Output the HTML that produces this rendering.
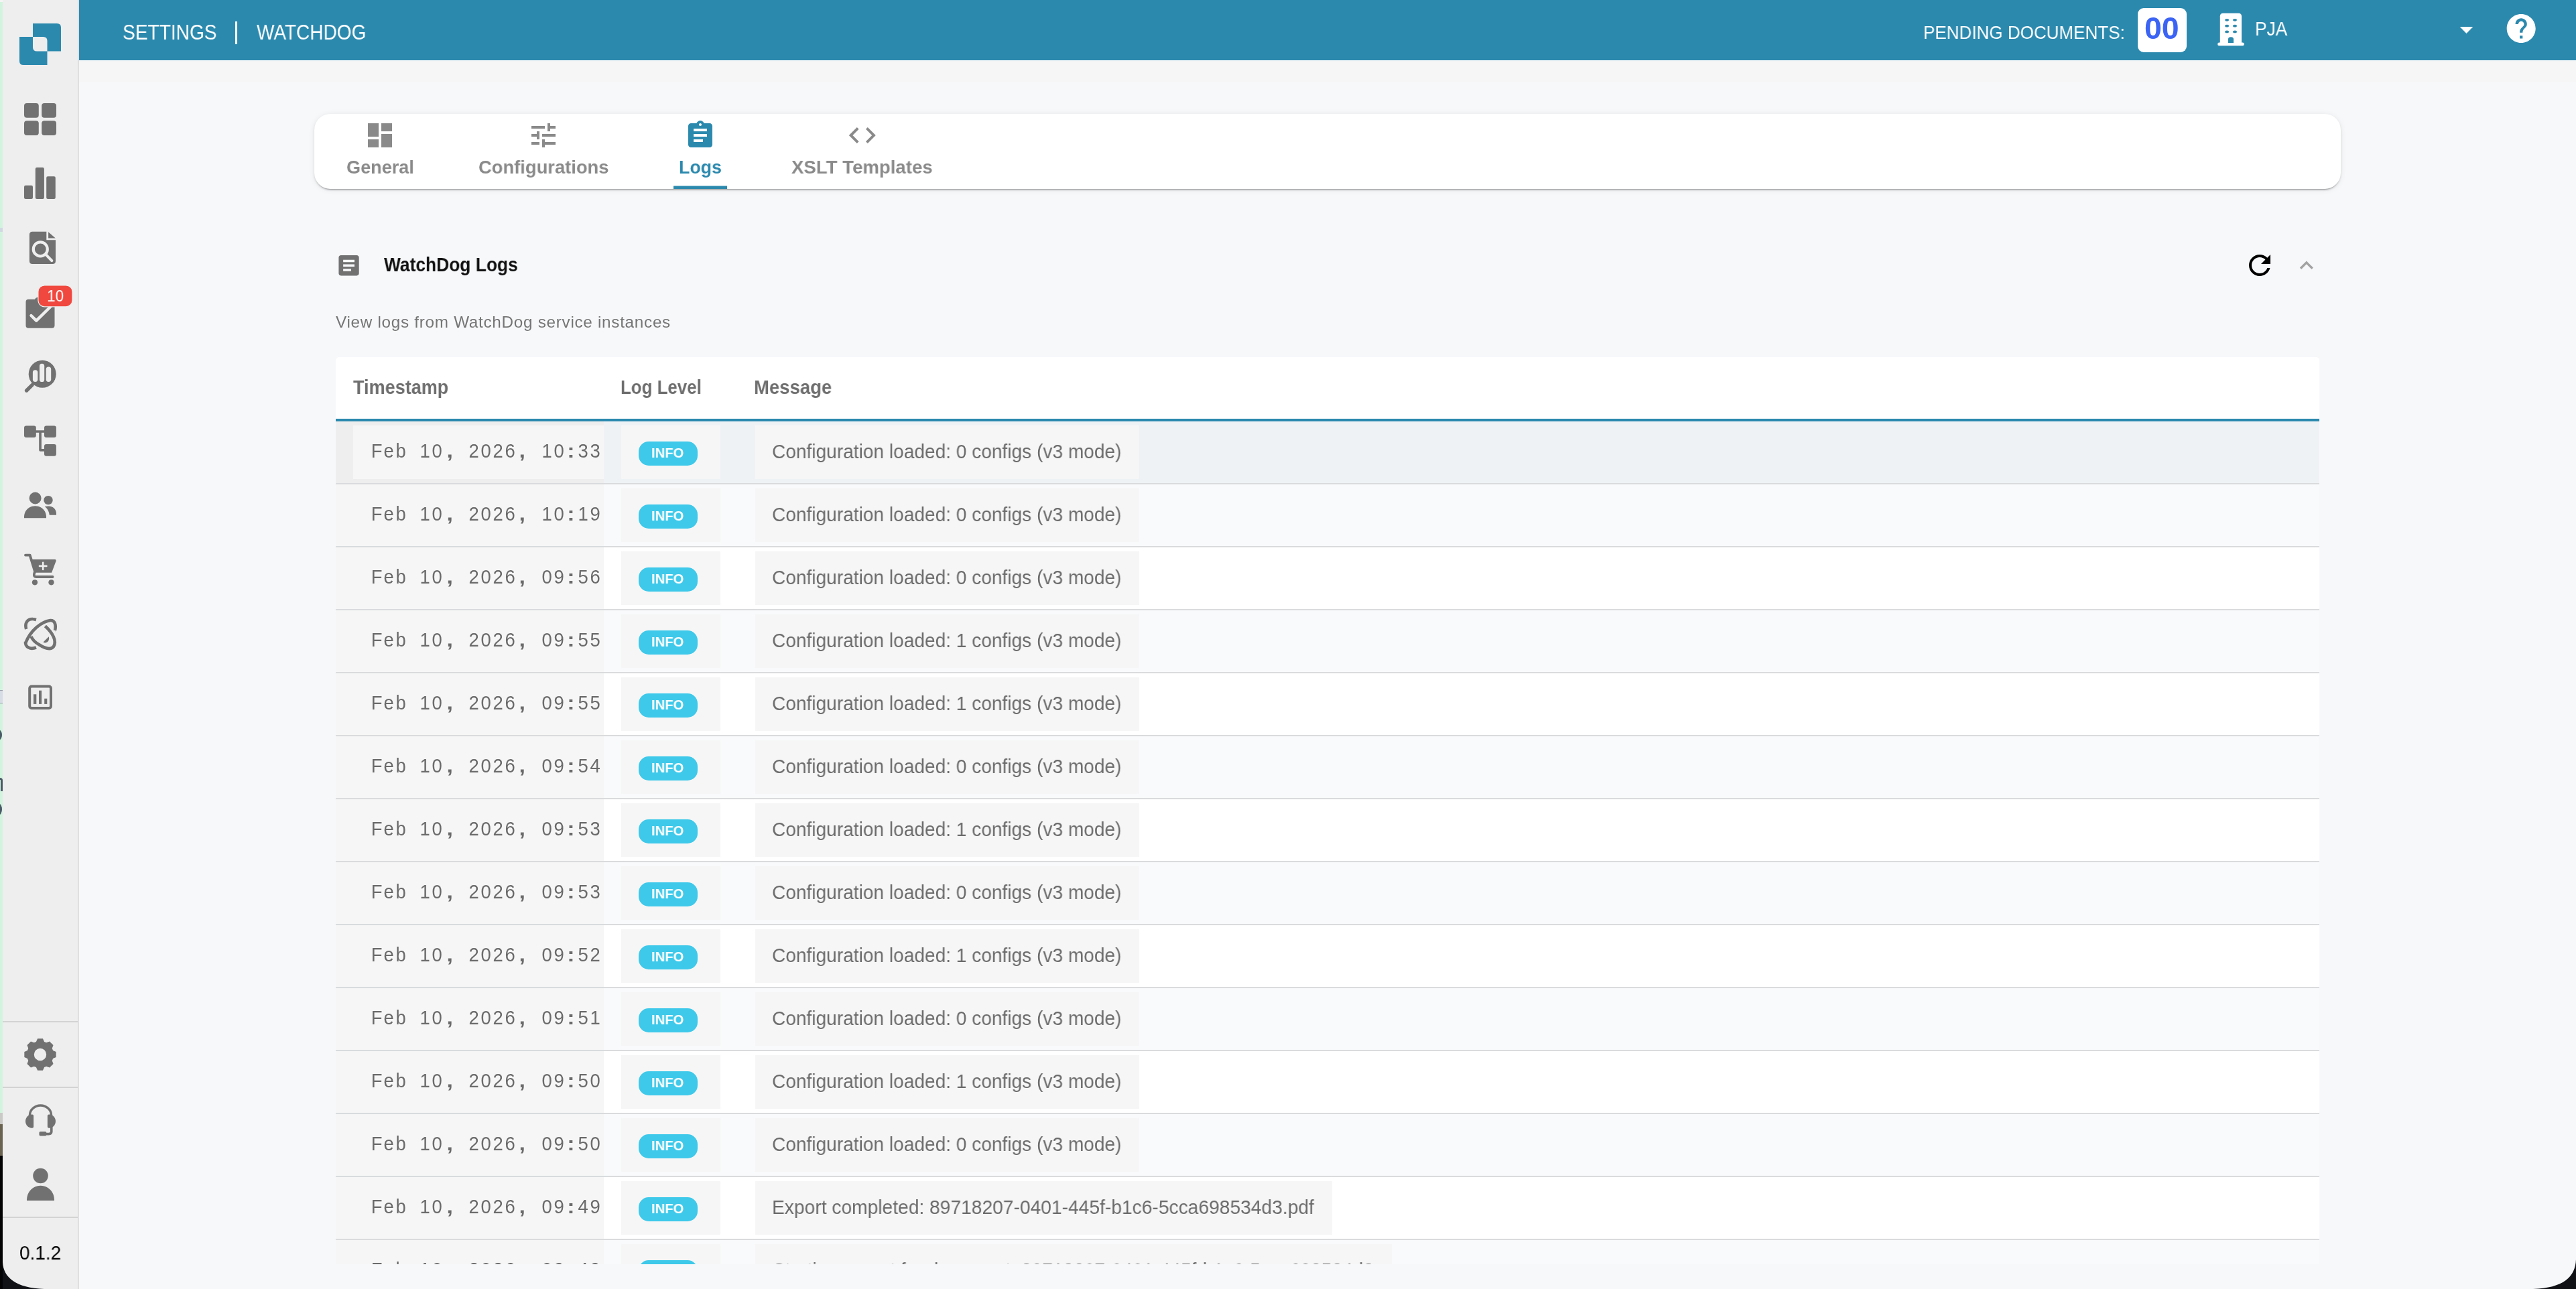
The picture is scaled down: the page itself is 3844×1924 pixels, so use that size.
<!DOCTYPE html>
<html><head><meta charset="utf-8"><title>WatchDog Logs</title>
<style>
html,body{margin:0;padding:0}
body{width:3844px;height:1924px;overflow:hidden;position:relative;background:#f7f8fa;font-family:"Liberation Sans",sans-serif}
.t{position:absolute;white-space:nowrap;will-change:transform}
.ms{display:inline-block;width:18.13px;text-align:center}
.ms i{display:inline-block;font-style:normal;transform:scaleX(0.93)}
.ms i.p{font-weight:700;transform:scale(1.15,1.0)}
</style></head><body>
<div style="position:absolute;left:0;top:0;width:4px;height:1924px;background:#d2f4df"></div><div style="position:absolute;left:0;top:0;width:4px;height:3px;background:#f4f4f4"></div><div style="position:absolute;left:0;top:1661px;width:4px;height:17px;background:#c9c9c6"></div><div style="position:absolute;left:0;top:1678px;width:4px;height:47px;background:#6a634f"></div><div style="position:absolute;left:0;top:1725px;width:4px;height:199px;background:#030303"></div><div style="position:absolute;left:0;top:340.4px;width:4px;height:5.5px;background:#cfd8e0"></div><div style="position:absolute;left:0;top:1030px;width:4px;height:19.5px;background:#d6dde5;border-top:1.5px solid #9aa3ad;border-bottom:1.5px solid #9aa3ad;box-sizing:border-box"></div><div style="position:absolute;left:-8px;top:1089px;width:11px;height:16px;border:3px solid #4a5a66;border-radius:50%;box-sizing:border-box"></div><div style="position:absolute;left:0;top:1161px;width:4px;height:20px;border-right:3px solid #4a5a66;border-top:3px solid #4a5a66;border-top-right-radius:6px;box-sizing:border-box"></div><div style="position:absolute;left:-8px;top:1198.5px;width:11px;height:18.5px;border:3px solid #4a5a66;border-radius:50%;box-sizing:border-box"></div><div style="position:absolute;left:4px;top:0;width:112px;height:1924px;background:#eeeeee"></div><div style="position:absolute;left:116px;top:0;width:2px;height:1924px;background:#dfdfdf"></div><div style="position:absolute;left:118px;top:0;width:3726px;height:90px;background:#2b89ae"></div><div style="position:absolute;left:118px;top:89px;width:3726px;height:1px;background:#2782a8"></div><div style="position:absolute;left:118px;top:90px;width:3726px;height:1.2px;background:#ffffff"></div><div style="position:absolute;left:118px;top:91.2px;width:3726px;height:31px;background:#f6f6f6"></div><div style="position:absolute;left:4px;top:1524px;width:112px;height:2px;background:#d3d3d3"></div><div style="position:absolute;left:4px;top:1622px;width:112px;height:2px;background:#d3d3d3"></div><div style="position:absolute;left:4px;top:1816px;width:112px;height:2px;background:#d3d3d3"></div><svg style="position:absolute;left:0;top:0" width="118" height="1924" viewBox="0 0 118 1924"><path fill="#2b89ae" d="M49,35 H85 Q91,35 91,41 V76.5 H49 Z"/><path fill="#2b89ae" d="M29,55 H70.5 V97 H35 Q29,97 29,91 Z"/><path fill="#eeeeee" d="M49,55 H64.5 Q70.5,55 70.5,61 V76.5 H55 Q49,76.5 49,70.5 Z"/><rect x="36" y="154" width="21.8" height="21.8" rx="4" fill="#717171"/><rect x="36" y="180.2" width="21.8" height="21.8" rx="4" fill="#717171"/><rect x="62.2" y="154" width="21.8" height="21.8" rx="4" fill="#717171"/><rect x="62.2" y="180.2" width="21.8" height="21.8" rx="4" fill="#717171"/><rect x="36" y="276.7" width="13" height="20.2" rx="2.2" fill="#717171"/><rect x="52.8" y="249.9" width="13.1" height="47" rx="2.2" fill="#717171"/><rect x="69.2" y="263.2" width="13.6" height="33.7" rx="2.2" fill="#717171"/><path fill="#717171" d="M48.4,345.8 H69.3 V358.3 H83 V389.4 Q83,393.9 78.5,393.9 H48.4 Q43.9,393.9 43.9,389.4 V350.3 Q43.9,345.8 48.4,345.8 Z"/><path fill="#717171" d="M72.1,346.2 L82.8,355.5 H72.1 Z"/><circle cx="60.3" cy="371.9" r="10.5" fill="none" stroke="#eeeeee" stroke-width="4.2"/><line x1="68.3" y1="379.9" x2="77.3" y2="389.1" stroke="#eeeeee" stroke-width="4.2" stroke-linecap="round"/><path fill="#717171" d="M42.5,446.7 H52 Q54,443 60,443 Q66,443 68,446.7 H77.5 Q81.5,446.7 81.5,450.7 V485.8 Q81.5,489.8 77.5,489.8 H42.5 Q38.5,489.8 38.5,485.8 V450.7 Q38.5,446.7 42.5,446.7 Z"/><polyline points="46.5,471 54.2,478.6 75.2,458" fill="none" stroke="#eeeeee" stroke-width="4.4" stroke-linecap="round" stroke-linejoin="round"/><rect x="56.9" y="425.9" width="51.1" height="31.9" rx="9.5" fill="#f0483e" stroke="#eeeeee" stroke-width="1.2"/><circle cx="63.2" cy="558.3" r="20.5" fill="#717171"/><line x1="39.6" y1="583" x2="48" y2="574.6" stroke="#717171" stroke-width="5.4" stroke-linecap="round"/><rect x="48.9" y="552.3" width="7.4" height="17.7" rx="3.7" fill="#eeeeee"/><rect x="59" y="542.7" width="7.2" height="27.3" rx="3.6" fill="#eeeeee"/><rect x="68.7" y="547.6" width="7.5" height="22.4" rx="3.7" fill="#eeeeee"/><rect x="36" y="635.5" width="17.8" height="17.4" rx="3" fill="#717171"/><rect x="66" y="635.5" width="17.9" height="17.4" rx="3" fill="#717171"/><rect x="66" y="662.9" width="17.9" height="17.8" rx="3" fill="#717171"/><rect x="52" y="642.3" width="16" height="3.5" fill="#717171"/><path fill="#717171" d="M58.2,643 H61.9 V670 H67 V673.7 H60.2 Q58.2,673.7 58.2,671.7 Z"/><circle cx="52.6" cy="743.5" r="9" fill="#717171"/><path fill="#717171" d="M36,773.3 V770.5 C36.5,761.5 44,755.3 52.5,755.3 C61,755.3 68.5,761.5 69,770.5 V773.3 Z"/><circle cx="72" cy="746.6" r="6.7" fill="#717171"/><path fill="#717171" d="M66.8,756 C68.5,755.6 71,755.4 73,755.4 C79.5,755.4 84,760.5 84,766.5 V768.7 H73.8 C73.2,763.5 70.8,759 66.8,756 Z"/><polyline points="38,828.6 44.6,828.6 51.8,852" fill="none" stroke="#717171" stroke-width="3.9" stroke-linecap="round" stroke-linejoin="round"/><path fill="#717171" d="M47.2,835.1 H82.3 Q84.3,835.4 83.6,837.4 L77.1,854.7 H52.8 Z"/><path d="M52.2,852.5 L50.9,857 Q50.2,861 54,861 H78.6" fill="none" stroke="#717171" stroke-width="3.8" stroke-linecap="round" stroke-linejoin="round"/><circle cx="52" cy="869.3" r="4.1" fill="#717171"/><circle cx="76.5" cy="869.3" r="4.1" fill="#717171"/><line x1="59" y1="844.9" x2="69.4" y2="844.9" stroke="#eeeeee" stroke-width="2.6" stroke-linecap="round"/><line x1="64.2" y1="839.8" x2="64.2" y2="850" stroke="#eeeeee" stroke-width="2.6" stroke-linecap="round"/><g fill="none" stroke="#717171" stroke-width="4.6" stroke-linecap="butt"><path d="M39.2,939 C36.5,930 41,923.5 49,924 C50.5,924 52,924.5 54,925"/><path d="M38,960 C46,940 62,928 75,926 C82,925.5 84,933 82,941"/><path d="M82,941 L82.2,941"/><path d="M67.4,934.5 C79,945 85,957 80,965 C76,970 68,968.5 58,962 C52,958.5 48,954 46.5,950"/><path d="M54,966.5 C45,970 37.5,966 38,958"/></g><path fill="#717171" d="M72.8,950.3 C74,955 72,959 67.5,959.5 C66.5,959.5 65.5,959 64.5,958.5 Z"/><rect x="44.2" y="1024.5" width="31.8" height="32.4" rx="3" fill="none" stroke="#717171" stroke-width="4"/><rect x="50" y="1036.3" width="4.3" height="14.6" fill="#717171"/><rect x="58" y="1030.7" width="4.1" height="20.2" fill="#717171"/><rect x="66.2" y="1042.7" width="4.1" height="8.2" fill="#717171"/><path fill="#717171" fill-rule="evenodd" d="M53.90,1554.95 L56.06,1550.33 L63.94,1550.33 L66.10,1554.95 L69.15,1556.22 L73.95,1554.47 L79.53,1560.05 L77.78,1564.85 L79.05,1567.90 L83.67,1570.06 L83.67,1577.94 L79.05,1580.10 L77.78,1583.15 L79.53,1587.95 L73.95,1593.53 L69.15,1591.78 L66.10,1593.05 L63.94,1597.67 L56.06,1597.67 L53.90,1593.05 L50.85,1591.78 L46.05,1593.53 L40.47,1587.95 L42.22,1583.15 L40.95,1580.10 L36.33,1577.94 L36.33,1570.06 L40.95,1567.90 L42.22,1564.85 L40.47,1560.05 L46.05,1554.47 L50.85,1556.22Z M69.2,1574 A9.2,9.2 0 1 0 50.8,1574 A9.2,9.2 0 1 0 69.2,1574 Z"/><path d="M44.5,1667 V1664.5 A16,14.5 0 0 1 76.5,1664.5 V1667" fill="none" stroke="#717171" stroke-width="3.5"/><path fill="#717171" d="M50.1,1665.5 V1681.7 Q50.1,1683.7 48.1,1683.7 H47.5 C42.2,1683.7 38,1679.2 38,1673.6 C38,1668 42.2,1663.5 47.5,1663.5 H48.1 Q50.1,1663.5 50.1,1665.5 Z"/><path fill="#717171" d="M70.9,1665.5 V1681.7 Q70.9,1683.7 72.9,1683.7 H73.5 C78.8,1683.7 83,1679.2 83,1673.6 C83,1668 78.8,1663.5 73.5,1663.5 H72.9 Q70.9,1663.5 70.9,1665.5 Z"/><path d="M76.8,1682 V1689 Q76.8,1692.6 72.8,1692.6 H67" fill="none" stroke="#717171" stroke-width="3.6"/><rect x="58.5" y="1689" width="10.8" height="6.5" rx="1.8" fill="#717171"/><circle cx="60.5" cy="1755" r="11.3" fill="#717171"/><path fill="#717171" d="M40,1792 V1790.5 C40.5,1777.5 50,1769.7 60.5,1769.7 C71,1769.7 80.5,1777.5 81,1790.5 V1792 Z"/></svg><div class="t" style="left:69.78px;top:430.33px;font-size:24.42px;line-height:24.42px;color:#fff;font-weight:400;font-family:'Liberation Sans',sans-serif;transform:scaleX(0.9310);transform-origin:0 0;">10</div><div class="t" style="left:29.13px;top:1856.24px;font-size:28.78px;line-height:28.78px;color:#000;font-weight:400;font-family:'Liberation Sans',sans-serif;transform:scaleX(0.9719);transform-origin:0 0;">0.1.2</div><div class="t" style="left:182.82px;top:33.18px;font-size:31.69px;line-height:31.69px;color:#fff;font-weight:400;font-family:'Liberation Sans',sans-serif;transform:scaleX(0.8871);transform-origin:0 0;">SETTINGS</div><div style="position:absolute;left:351px;top:32.4px;width:3.2px;height:34px;background:#fff"></div><div class="t" style="left:382.70px;top:33.18px;font-size:31.69px;line-height:31.69px;color:#fff;font-weight:400;font-family:'Liberation Sans',sans-serif;transform:scaleX(0.8836);transform-origin:0 0;">WATCHDOG</div><div class="t" style="left:2869.67px;top:33.88px;font-size:28.49px;line-height:28.49px;color:#fff;font-weight:400;font-family:'Liberation Sans',sans-serif;transform:scaleX(0.9139);transform-origin:0 0;">PENDING DOCUMENTS:</div><div style="position:absolute;left:3190px;top:12px;width:73px;height:66px;border-radius:9px;background:#fff"></div><div class="t" style="left:3200.15px;top:20.12px;font-size:45.93px;line-height:45.93px;color:#3c64f4;font-weight:700;font-family:'Liberation Sans',sans-serif;transform:scaleX(1.0127);transform-origin:0 0;">00</div><svg style="position:absolute;left:0;top:0" width="3844" height="90" viewBox="0 0 3844 90"><path fill="#fff" d="M3312.8,64 V24.3 Q3312.8,19.8 3317.3,19.8 H3340.5 Q3345,19.8 3345,24.3 V64 Z"/><rect x="3309.2" y="63.5" width="39.6" height="4.7" rx="2.3" fill="#fff"/><ellipse cx="3323.1" cy="29.8" rx="2.9" ry="1.9" fill="#2b89ae"/><ellipse cx="3323.1" cy="38.7" rx="2.9" ry="1.9" fill="#2b89ae"/><ellipse cx="3323.1" cy="47.4" rx="2.9" ry="1.9" fill="#2b89ae"/><ellipse cx="3335" cy="29.8" rx="2.9" ry="1.9" fill="#2b89ae"/><ellipse cx="3335" cy="38.7" rx="2.9" ry="1.9" fill="#2b89ae"/><ellipse cx="3335" cy="47.4" rx="2.9" ry="1.9" fill="#2b89ae"/><path fill="#2b89ae" d="M3325,64 V58.5 Q3325,55.2 3329,55.2 Q3333,55.2 3333,58.5 V64 Z"/><path fill="#fff" d="M3670.7,39.9 H3690.3 L3680.5,50.1 Z"/><g transform="translate(3736.4,16.6) scale(2.15)"><path fill="#fff" d="M12 2C6.48 2 2 6.48 2 12s4.48 10 10 10 10-4.48 10-10S17.52 2 12 2zm1 17h-2v-2h2v2zm2.07-7.75l-.9.92C13.45 12.9 13 13.5 13 15h-2v-.5c0-1.1.45-2.1 1.17-2.83l1.24-1.26c.37-.36.59-.86.59-1.41 0-1.1-.9-2-2-2s-2 .9-2 2H8c0-2.21 1.79-4 4-4s4 1.79 4 4c0 .88-.36 1.68-.93 2.25z"/></g></svg><div class="t" style="left:3364.64px;top:29.17px;font-size:29.22px;line-height:29.22px;color:#fff;font-weight:400;font-family:'Liberation Sans',sans-serif;transform:scaleX(0.9020);transform-origin:0 0;">PJA</div><div style="position:absolute;left:469px;top:170px;width:3024px;height:112px;border-radius:24px;background:#fff;box-shadow:0 3px 2px -2px rgba(0,0,0,0.30),0 2px 3px 0 rgba(0,0,0,0.10),0 1px 10px 0 rgba(0,0,0,0.08)"></div><svg style="position:absolute;left:0;top:0" width="3844" height="300" viewBox="0 0 3844 300"><g transform="translate(543,178) scale(2)"><path fill="#8a8a8a" d="M3 13h8V3H3v10zm0 8h8v-6H3v6zm10 0h8V11h-8v10zm0-18v6h8V3h-8z"/></g><g transform="translate(787,178) scale(2)"><path fill="#8a8a8a" d="M3 17v2h6v-2H3zM3 5v2h10V5H3zm10 16v-2h8v-2h-8v-2h-2v6h2zM7 9v2H3v2h4v2h2V9H7zm14 4v-2H11v2h10zm-6-4h2V7h4V5h-4V3h-2v6z"/></g><g transform="translate(1021,178) scale(2)"><path fill="#2b89ae" d="M19 3h-4.18C14.4 1.84 13.3 1 12 1c-1.3 0-2.4.84-2.82 2H5c-1.1 0-2 .9-2 2v14c0 1.1.9 2 2 2h14c1.1 0 2-.9 2-2V5c0-1.1-.9-2-2-2zm-7 0c.55 0 1 .45 1 1s-.45 1-1 1-1-.45-1-1 .45-1 1-1zm2 14H7v-2h7v2zm3-4H7v-2h10v2zm0-4H7V7h10v2z"/></g><g transform="translate(1262.8,178) scale(2)"><path fill="#8a8a8a" d="M9.4 16.6L4.8 12l4.6-4.6L8 6l-6 6 6 6 1.4-1.4zm5.2 0l4.6-4.6-4.6-4.6L16 6l6 6-6 6-1.4-1.4z"/></g><rect x="1005" y="277.5" width="80" height="4.5" fill="#2b89ae"/></svg><div class="t" style="left:516.75px;top:234.78px;font-size:28.49px;line-height:28.49px;color:#8a8a8a;font-weight:700;font-family:'Liberation Sans',sans-serif;transform:scaleX(0.9505);transform-origin:0 0;">General</div><div class="t" style="left:713.95px;top:234.78px;font-size:28.49px;line-height:28.49px;color:#8a8a8a;font-weight:700;font-family:'Liberation Sans',sans-serif;transform:scaleX(0.9600);transform-origin:0 0;">Configurations</div><div class="t" style="left:1012.73px;top:234.78px;font-size:28.49px;line-height:28.49px;color:#2b89ae;font-weight:700;font-family:'Liberation Sans',sans-serif;transform:scaleX(0.9384);transform-origin:0 0;">Logs</div><div class="t" style="left:1180.60px;top:234.78px;font-size:28.49px;line-height:28.49px;color:#8a8a8a;font-weight:700;font-family:'Liberation Sans',sans-serif;transform:scaleX(0.9692);transform-origin:0 0;">XSLT Templates</div><svg style="position:absolute;left:0;top:360px" width="3844" height="70" viewBox="0 360 3844 70"><g transform="translate(500.35,376.05) scale(1.683)"><path fill="#717171" d="M19 3H5c-1.1 0-2 .9-2 2v14c0 1.1.9 2 2 2h14c1.1 0 2-.9 2-2V5c0-1.1-.9-2-2-2zm-5 14H7v-2h7v2zm3-4H7v-2h10v2zm0-4H7V7h10v2z"/></g><g transform="translate(3348,372) scale(2)"><path fill="#000" d="M17.65 6.35C16.2 4.9 14.21 4 12 4c-4.42 0-7.99 3.58-7.99 8s3.57 8 7.99 8c3.73 0 6.84-2.55 7.73-6h-2.08c-.82 2.33-3.04 4-5.65 4-3.31 0-6-2.69-6-6s2.69-6 6-6c1.66 0 3.14.69 4.22 1.78L13 11h7V4l-2.35 2.35z"/></g><g transform="translate(3421.7,376.1) scale(1.68)"><path fill="#a3a3a3" d="M12 8l-6 6 1.41 1.41L12 10.83l4.59 4.58L18 14z"/></g></svg><div class="t" style="left:573.00px;top:380.35px;font-size:29.36px;line-height:29.36px;color:#111;font-weight:700;font-family:'Liberation Sans',sans-serif;transform:scaleX(0.8984);transform-origin:0 0;">WatchDog Logs</div><div class="t" style="left:501.00px;top:468.95px;font-size:24.27px;line-height:24.27px;color:#757575;font-weight:400;font-family:'Liberation Sans',sans-serif;letter-spacing:0.714px;">View logs from WatchDog service instances</div><div style="position:absolute;left:501px;top:533px;width:2960px;height:1354px;overflow:hidden"><div style="position:absolute;left:0;top:0;width:2960px;height:96px;background:#fff;border-radius:5px 5px 0 0"></div><div style="position:absolute;left:0;top:92px;width:2960px;height:4px;background:#2b89ae"></div><div class="t" style="left:26.10px;top:30.03px;font-size:30.09px;line-height:30.09px;color:#6e6e6e;font-weight:700;font-family:'Liberation Sans',sans-serif;transform:scaleX(0.8989);transform-origin:0 0;">Timestamp</div><div class="t" style="left:424.68px;top:30.03px;font-size:30.09px;line-height:30.09px;color:#6e6e6e;font-weight:700;font-family:'Liberation Sans',sans-serif;transform:scaleX(0.8605);transform-origin:0 0;">Log Level</div><div class="t" style="left:624.18px;top:30.03px;font-size:30.09px;line-height:30.09px;color:#6e6e6e;font-weight:700;font-family:'Liberation Sans',sans-serif;transform:scaleX(0.9150);transform-origin:0 0;">Message</div><div style="position:absolute;left:0;top:96px;width:2960px;height:92px;background:#eef2f5"></div><div style="position:absolute;left:0;top:188px;width:2960px;height:2px;background:#d9dbdd"></div><div style="position:absolute;left:0;top:96px;width:400px;height:92px;background:#eeeeee"></div><div style="position:absolute;left:26px;top:102px;width:374px;height:79.5px;background:#f6f6f6"></div><div style="position:absolute;left:426px;top:102px;width:148px;height:79.5px;background:#f6f6f6"></div><div style="position:absolute;left:452px;top:126px;width:88px;height:36px;border-radius:15px;background:#3ec9ea"></div><div class="t" style="left:470.94px;top:133.43px;font-size:20.64px;line-height:20.64px;color:#fff;font-weight:700;font-family:'Liberation Sans',sans-serif;transform:scaleX(0.9803);transform-origin:0 0;">INFO</div><div class="t" style="left:51.80px;top:125.43px;font-size:29.5px;line-height:29.5px;color:#6b6b6b"><span class="ms"><i>F</i></span><span class="ms"><i>e</i></span><span class="ms"><i>b</i></span><span class="ms"><i>&nbsp;</i></span><span class="ms"><i>1</i></span><span class="ms"><i>0</i></span><span class="ms"><i class="p">,</i></span><span class="ms"><i>&nbsp;</i></span><span class="ms"><i>2</i></span><span class="ms"><i>0</i></span><span class="ms"><i>2</i></span><span class="ms"><i>6</i></span><span class="ms"><i class="p">,</i></span><span class="ms"><i>&nbsp;</i></span><span class="ms"><i>1</i></span><span class="ms"><i>0</i></span><span class="ms"><i class="p">:</i></span><span class="ms"><i>3</i></span><span class="ms"><i>3</i></span></div><div style="position:absolute;left:626px;top:102px;width:573.2px;height:79.5px;background:#f6f6f6"></div><div class="t" style="left:651.48px;top:126.15px;font-size:29.36px;line-height:29.36px;color:#6b6b6b;font-weight:400;font-family:'Liberation Sans',sans-serif;transform:scaleX(0.9566);transform-origin:0 0;">Configuration loaded: 0 configs (v3 mode)</div><div style="position:absolute;left:0;top:190px;width:2960px;height:92px;background:#f8fafb"></div><div style="position:absolute;left:0;top:282px;width:2960px;height:2px;background:#d9dbdd"></div><div style="position:absolute;left:0;top:190px;width:400px;height:92px;background:#f6f6f6"></div><div style="position:absolute;left:426px;top:196px;width:148px;height:79.5px;background:#f6f6f6"></div><div style="position:absolute;left:452px;top:220px;width:88px;height:36px;border-radius:15px;background:#3ec9ea"></div><div class="t" style="left:470.94px;top:227.43px;font-size:20.64px;line-height:20.64px;color:#fff;font-weight:700;font-family:'Liberation Sans',sans-serif;transform:scaleX(0.9803);transform-origin:0 0;">INFO</div><div class="t" style="left:51.80px;top:219.43px;font-size:29.5px;line-height:29.5px;color:#6b6b6b"><span class="ms"><i>F</i></span><span class="ms"><i>e</i></span><span class="ms"><i>b</i></span><span class="ms"><i>&nbsp;</i></span><span class="ms"><i>1</i></span><span class="ms"><i>0</i></span><span class="ms"><i class="p">,</i></span><span class="ms"><i>&nbsp;</i></span><span class="ms"><i>2</i></span><span class="ms"><i>0</i></span><span class="ms"><i>2</i></span><span class="ms"><i>6</i></span><span class="ms"><i class="p">,</i></span><span class="ms"><i>&nbsp;</i></span><span class="ms"><i>1</i></span><span class="ms"><i>0</i></span><span class="ms"><i class="p">:</i></span><span class="ms"><i>1</i></span><span class="ms"><i>9</i></span></div><div style="position:absolute;left:626px;top:196px;width:573.2px;height:79.5px;background:#f6f6f6"></div><div class="t" style="left:651.48px;top:220.15px;font-size:29.36px;line-height:29.36px;color:#6b6b6b;font-weight:400;font-family:'Liberation Sans',sans-serif;transform:scaleX(0.9566);transform-origin:0 0;">Configuration loaded: 0 configs (v3 mode)</div><div style="position:absolute;left:0;top:284px;width:2960px;height:92px;background:#ffffff"></div><div style="position:absolute;left:0;top:376px;width:2960px;height:2px;background:#d9dbdd"></div><div style="position:absolute;left:0;top:284px;width:400px;height:92px;background:#f6f6f6"></div><div style="position:absolute;left:426px;top:290px;width:148px;height:79.5px;background:#f6f6f6"></div><div style="position:absolute;left:452px;top:314px;width:88px;height:36px;border-radius:15px;background:#3ec9ea"></div><div class="t" style="left:470.94px;top:321.43px;font-size:20.64px;line-height:20.64px;color:#fff;font-weight:700;font-family:'Liberation Sans',sans-serif;transform:scaleX(0.9803);transform-origin:0 0;">INFO</div><div class="t" style="left:51.80px;top:313.43px;font-size:29.5px;line-height:29.5px;color:#6b6b6b"><span class="ms"><i>F</i></span><span class="ms"><i>e</i></span><span class="ms"><i>b</i></span><span class="ms"><i>&nbsp;</i></span><span class="ms"><i>1</i></span><span class="ms"><i>0</i></span><span class="ms"><i class="p">,</i></span><span class="ms"><i>&nbsp;</i></span><span class="ms"><i>2</i></span><span class="ms"><i>0</i></span><span class="ms"><i>2</i></span><span class="ms"><i>6</i></span><span class="ms"><i class="p">,</i></span><span class="ms"><i>&nbsp;</i></span><span class="ms"><i>0</i></span><span class="ms"><i>9</i></span><span class="ms"><i class="p">:</i></span><span class="ms"><i>5</i></span><span class="ms"><i>6</i></span></div><div style="position:absolute;left:626px;top:290px;width:573.2px;height:79.5px;background:#f6f6f6"></div><div class="t" style="left:651.48px;top:314.15px;font-size:29.36px;line-height:29.36px;color:#6b6b6b;font-weight:400;font-family:'Liberation Sans',sans-serif;transform:scaleX(0.9566);transform-origin:0 0;">Configuration loaded: 0 configs (v3 mode)</div><div style="position:absolute;left:0;top:378px;width:2960px;height:92px;background:#f8fafb"></div><div style="position:absolute;left:0;top:470px;width:2960px;height:2px;background:#d9dbdd"></div><div style="position:absolute;left:0;top:378px;width:400px;height:92px;background:#f6f6f6"></div><div style="position:absolute;left:426px;top:384px;width:148px;height:79.5px;background:#f6f6f6"></div><div style="position:absolute;left:452px;top:408px;width:88px;height:36px;border-radius:15px;background:#3ec9ea"></div><div class="t" style="left:470.94px;top:415.43px;font-size:20.64px;line-height:20.64px;color:#fff;font-weight:700;font-family:'Liberation Sans',sans-serif;transform:scaleX(0.9803);transform-origin:0 0;">INFO</div><div class="t" style="left:51.80px;top:407.43px;font-size:29.5px;line-height:29.5px;color:#6b6b6b"><span class="ms"><i>F</i></span><span class="ms"><i>e</i></span><span class="ms"><i>b</i></span><span class="ms"><i>&nbsp;</i></span><span class="ms"><i>1</i></span><span class="ms"><i>0</i></span><span class="ms"><i class="p">,</i></span><span class="ms"><i>&nbsp;</i></span><span class="ms"><i>2</i></span><span class="ms"><i>0</i></span><span class="ms"><i>2</i></span><span class="ms"><i>6</i></span><span class="ms"><i class="p">,</i></span><span class="ms"><i>&nbsp;</i></span><span class="ms"><i>0</i></span><span class="ms"><i>9</i></span><span class="ms"><i class="p">:</i></span><span class="ms"><i>5</i></span><span class="ms"><i>5</i></span></div><div style="position:absolute;left:626px;top:384px;width:573.2px;height:79.5px;background:#f6f6f6"></div><div class="t" style="left:651.48px;top:408.15px;font-size:29.36px;line-height:29.36px;color:#6b6b6b;font-weight:400;font-family:'Liberation Sans',sans-serif;transform:scaleX(0.9566);transform-origin:0 0;">Configuration loaded: 1 configs (v3 mode)</div><div style="position:absolute;left:0;top:472px;width:2960px;height:92px;background:#ffffff"></div><div style="position:absolute;left:0;top:564px;width:2960px;height:2px;background:#d9dbdd"></div><div style="position:absolute;left:0;top:472px;width:400px;height:92px;background:#f6f6f6"></div><div style="position:absolute;left:426px;top:478px;width:148px;height:79.5px;background:#f6f6f6"></div><div style="position:absolute;left:452px;top:502px;width:88px;height:36px;border-radius:15px;background:#3ec9ea"></div><div class="t" style="left:470.94px;top:509.43px;font-size:20.64px;line-height:20.64px;color:#fff;font-weight:700;font-family:'Liberation Sans',sans-serif;transform:scaleX(0.9803);transform-origin:0 0;">INFO</div><div class="t" style="left:51.80px;top:501.43px;font-size:29.5px;line-height:29.5px;color:#6b6b6b"><span class="ms"><i>F</i></span><span class="ms"><i>e</i></span><span class="ms"><i>b</i></span><span class="ms"><i>&nbsp;</i></span><span class="ms"><i>1</i></span><span class="ms"><i>0</i></span><span class="ms"><i class="p">,</i></span><span class="ms"><i>&nbsp;</i></span><span class="ms"><i>2</i></span><span class="ms"><i>0</i></span><span class="ms"><i>2</i></span><span class="ms"><i>6</i></span><span class="ms"><i class="p">,</i></span><span class="ms"><i>&nbsp;</i></span><span class="ms"><i>0</i></span><span class="ms"><i>9</i></span><span class="ms"><i class="p">:</i></span><span class="ms"><i>5</i></span><span class="ms"><i>5</i></span></div><div style="position:absolute;left:626px;top:478px;width:573.2px;height:79.5px;background:#f6f6f6"></div><div class="t" style="left:651.48px;top:502.15px;font-size:29.36px;line-height:29.36px;color:#6b6b6b;font-weight:400;font-family:'Liberation Sans',sans-serif;transform:scaleX(0.9566);transform-origin:0 0;">Configuration loaded: 1 configs (v3 mode)</div><div style="position:absolute;left:0;top:566px;width:2960px;height:92px;background:#f8fafb"></div><div style="position:absolute;left:0;top:658px;width:2960px;height:2px;background:#d9dbdd"></div><div style="position:absolute;left:0;top:566px;width:400px;height:92px;background:#f6f6f6"></div><div style="position:absolute;left:426px;top:572px;width:148px;height:79.5px;background:#f6f6f6"></div><div style="position:absolute;left:452px;top:596px;width:88px;height:36px;border-radius:15px;background:#3ec9ea"></div><div class="t" style="left:470.94px;top:603.43px;font-size:20.64px;line-height:20.64px;color:#fff;font-weight:700;font-family:'Liberation Sans',sans-serif;transform:scaleX(0.9803);transform-origin:0 0;">INFO</div><div class="t" style="left:51.80px;top:595.43px;font-size:29.5px;line-height:29.5px;color:#6b6b6b"><span class="ms"><i>F</i></span><span class="ms"><i>e</i></span><span class="ms"><i>b</i></span><span class="ms"><i>&nbsp;</i></span><span class="ms"><i>1</i></span><span class="ms"><i>0</i></span><span class="ms"><i class="p">,</i></span><span class="ms"><i>&nbsp;</i></span><span class="ms"><i>2</i></span><span class="ms"><i>0</i></span><span class="ms"><i>2</i></span><span class="ms"><i>6</i></span><span class="ms"><i class="p">,</i></span><span class="ms"><i>&nbsp;</i></span><span class="ms"><i>0</i></span><span class="ms"><i>9</i></span><span class="ms"><i class="p">:</i></span><span class="ms"><i>5</i></span><span class="ms"><i>4</i></span></div><div style="position:absolute;left:626px;top:572px;width:573.2px;height:79.5px;background:#f6f6f6"></div><div class="t" style="left:651.48px;top:596.15px;font-size:29.36px;line-height:29.36px;color:#6b6b6b;font-weight:400;font-family:'Liberation Sans',sans-serif;transform:scaleX(0.9566);transform-origin:0 0;">Configuration loaded: 0 configs (v3 mode)</div><div style="position:absolute;left:0;top:660px;width:2960px;height:92px;background:#ffffff"></div><div style="position:absolute;left:0;top:752px;width:2960px;height:2px;background:#d9dbdd"></div><div style="position:absolute;left:0;top:660px;width:400px;height:92px;background:#f6f6f6"></div><div style="position:absolute;left:426px;top:666px;width:148px;height:79.5px;background:#f6f6f6"></div><div style="position:absolute;left:452px;top:690px;width:88px;height:36px;border-radius:15px;background:#3ec9ea"></div><div class="t" style="left:470.94px;top:697.43px;font-size:20.64px;line-height:20.64px;color:#fff;font-weight:700;font-family:'Liberation Sans',sans-serif;transform:scaleX(0.9803);transform-origin:0 0;">INFO</div><div class="t" style="left:51.80px;top:689.43px;font-size:29.5px;line-height:29.5px;color:#6b6b6b"><span class="ms"><i>F</i></span><span class="ms"><i>e</i></span><span class="ms"><i>b</i></span><span class="ms"><i>&nbsp;</i></span><span class="ms"><i>1</i></span><span class="ms"><i>0</i></span><span class="ms"><i class="p">,</i></span><span class="ms"><i>&nbsp;</i></span><span class="ms"><i>2</i></span><span class="ms"><i>0</i></span><span class="ms"><i>2</i></span><span class="ms"><i>6</i></span><span class="ms"><i class="p">,</i></span><span class="ms"><i>&nbsp;</i></span><span class="ms"><i>0</i></span><span class="ms"><i>9</i></span><span class="ms"><i class="p">:</i></span><span class="ms"><i>5</i></span><span class="ms"><i>3</i></span></div><div style="position:absolute;left:626px;top:666px;width:573.2px;height:79.5px;background:#f6f6f6"></div><div class="t" style="left:651.48px;top:690.15px;font-size:29.36px;line-height:29.36px;color:#6b6b6b;font-weight:400;font-family:'Liberation Sans',sans-serif;transform:scaleX(0.9566);transform-origin:0 0;">Configuration loaded: 1 configs (v3 mode)</div><div style="position:absolute;left:0;top:754px;width:2960px;height:92px;background:#f8fafb"></div><div style="position:absolute;left:0;top:846px;width:2960px;height:2px;background:#d9dbdd"></div><div style="position:absolute;left:0;top:754px;width:400px;height:92px;background:#f6f6f6"></div><div style="position:absolute;left:426px;top:760px;width:148px;height:79.5px;background:#f6f6f6"></div><div style="position:absolute;left:452px;top:784px;width:88px;height:36px;border-radius:15px;background:#3ec9ea"></div><div class="t" style="left:470.94px;top:791.43px;font-size:20.64px;line-height:20.64px;color:#fff;font-weight:700;font-family:'Liberation Sans',sans-serif;transform:scaleX(0.9803);transform-origin:0 0;">INFO</div><div class="t" style="left:51.80px;top:783.43px;font-size:29.5px;line-height:29.5px;color:#6b6b6b"><span class="ms"><i>F</i></span><span class="ms"><i>e</i></span><span class="ms"><i>b</i></span><span class="ms"><i>&nbsp;</i></span><span class="ms"><i>1</i></span><span class="ms"><i>0</i></span><span class="ms"><i class="p">,</i></span><span class="ms"><i>&nbsp;</i></span><span class="ms"><i>2</i></span><span class="ms"><i>0</i></span><span class="ms"><i>2</i></span><span class="ms"><i>6</i></span><span class="ms"><i class="p">,</i></span><span class="ms"><i>&nbsp;</i></span><span class="ms"><i>0</i></span><span class="ms"><i>9</i></span><span class="ms"><i class="p">:</i></span><span class="ms"><i>5</i></span><span class="ms"><i>3</i></span></div><div style="position:absolute;left:626px;top:760px;width:573.2px;height:79.5px;background:#f6f6f6"></div><div class="t" style="left:651.48px;top:784.15px;font-size:29.36px;line-height:29.36px;color:#6b6b6b;font-weight:400;font-family:'Liberation Sans',sans-serif;transform:scaleX(0.9566);transform-origin:0 0;">Configuration loaded: 0 configs (v3 mode)</div><div style="position:absolute;left:0;top:848px;width:2960px;height:92px;background:#ffffff"></div><div style="position:absolute;left:0;top:940px;width:2960px;height:2px;background:#d9dbdd"></div><div style="position:absolute;left:0;top:848px;width:400px;height:92px;background:#f6f6f6"></div><div style="position:absolute;left:426px;top:854px;width:148px;height:79.5px;background:#f6f6f6"></div><div style="position:absolute;left:452px;top:878px;width:88px;height:36px;border-radius:15px;background:#3ec9ea"></div><div class="t" style="left:470.94px;top:885.43px;font-size:20.64px;line-height:20.64px;color:#fff;font-weight:700;font-family:'Liberation Sans',sans-serif;transform:scaleX(0.9803);transform-origin:0 0;">INFO</div><div class="t" style="left:51.80px;top:877.43px;font-size:29.5px;line-height:29.5px;color:#6b6b6b"><span class="ms"><i>F</i></span><span class="ms"><i>e</i></span><span class="ms"><i>b</i></span><span class="ms"><i>&nbsp;</i></span><span class="ms"><i>1</i></span><span class="ms"><i>0</i></span><span class="ms"><i class="p">,</i></span><span class="ms"><i>&nbsp;</i></span><span class="ms"><i>2</i></span><span class="ms"><i>0</i></span><span class="ms"><i>2</i></span><span class="ms"><i>6</i></span><span class="ms"><i class="p">,</i></span><span class="ms"><i>&nbsp;</i></span><span class="ms"><i>0</i></span><span class="ms"><i>9</i></span><span class="ms"><i class="p">:</i></span><span class="ms"><i>5</i></span><span class="ms"><i>2</i></span></div><div style="position:absolute;left:626px;top:854px;width:573.2px;height:79.5px;background:#f6f6f6"></div><div class="t" style="left:651.48px;top:878.15px;font-size:29.36px;line-height:29.36px;color:#6b6b6b;font-weight:400;font-family:'Liberation Sans',sans-serif;transform:scaleX(0.9566);transform-origin:0 0;">Configuration loaded: 1 configs (v3 mode)</div><div style="position:absolute;left:0;top:942px;width:2960px;height:92px;background:#f8fafb"></div><div style="position:absolute;left:0;top:1034px;width:2960px;height:2px;background:#d9dbdd"></div><div style="position:absolute;left:0;top:942px;width:400px;height:92px;background:#f6f6f6"></div><div style="position:absolute;left:426px;top:948px;width:148px;height:79.5px;background:#f6f6f6"></div><div style="position:absolute;left:452px;top:972px;width:88px;height:36px;border-radius:15px;background:#3ec9ea"></div><div class="t" style="left:470.94px;top:979.43px;font-size:20.64px;line-height:20.64px;color:#fff;font-weight:700;font-family:'Liberation Sans',sans-serif;transform:scaleX(0.9803);transform-origin:0 0;">INFO</div><div class="t" style="left:51.80px;top:971.43px;font-size:29.5px;line-height:29.5px;color:#6b6b6b"><span class="ms"><i>F</i></span><span class="ms"><i>e</i></span><span class="ms"><i>b</i></span><span class="ms"><i>&nbsp;</i></span><span class="ms"><i>1</i></span><span class="ms"><i>0</i></span><span class="ms"><i class="p">,</i></span><span class="ms"><i>&nbsp;</i></span><span class="ms"><i>2</i></span><span class="ms"><i>0</i></span><span class="ms"><i>2</i></span><span class="ms"><i>6</i></span><span class="ms"><i class="p">,</i></span><span class="ms"><i>&nbsp;</i></span><span class="ms"><i>0</i></span><span class="ms"><i>9</i></span><span class="ms"><i class="p">:</i></span><span class="ms"><i>5</i></span><span class="ms"><i>1</i></span></div><div style="position:absolute;left:626px;top:948px;width:573.2px;height:79.5px;background:#f6f6f6"></div><div class="t" style="left:651.48px;top:972.15px;font-size:29.36px;line-height:29.36px;color:#6b6b6b;font-weight:400;font-family:'Liberation Sans',sans-serif;transform:scaleX(0.9566);transform-origin:0 0;">Configuration loaded: 0 configs (v3 mode)</div><div style="position:absolute;left:0;top:1036px;width:2960px;height:92px;background:#ffffff"></div><div style="position:absolute;left:0;top:1128px;width:2960px;height:2px;background:#d9dbdd"></div><div style="position:absolute;left:0;top:1036px;width:400px;height:92px;background:#f6f6f6"></div><div style="position:absolute;left:426px;top:1042px;width:148px;height:79.5px;background:#f6f6f6"></div><div style="position:absolute;left:452px;top:1066px;width:88px;height:36px;border-radius:15px;background:#3ec9ea"></div><div class="t" style="left:470.94px;top:1073.43px;font-size:20.64px;line-height:20.64px;color:#fff;font-weight:700;font-family:'Liberation Sans',sans-serif;transform:scaleX(0.9803);transform-origin:0 0;">INFO</div><div class="t" style="left:51.80px;top:1065.43px;font-size:29.5px;line-height:29.5px;color:#6b6b6b"><span class="ms"><i>F</i></span><span class="ms"><i>e</i></span><span class="ms"><i>b</i></span><span class="ms"><i>&nbsp;</i></span><span class="ms"><i>1</i></span><span class="ms"><i>0</i></span><span class="ms"><i class="p">,</i></span><span class="ms"><i>&nbsp;</i></span><span class="ms"><i>2</i></span><span class="ms"><i>0</i></span><span class="ms"><i>2</i></span><span class="ms"><i>6</i></span><span class="ms"><i class="p">,</i></span><span class="ms"><i>&nbsp;</i></span><span class="ms"><i>0</i></span><span class="ms"><i>9</i></span><span class="ms"><i class="p">:</i></span><span class="ms"><i>5</i></span><span class="ms"><i>0</i></span></div><div style="position:absolute;left:626px;top:1042px;width:573.2px;height:79.5px;background:#f6f6f6"></div><div class="t" style="left:651.48px;top:1066.15px;font-size:29.36px;line-height:29.36px;color:#6b6b6b;font-weight:400;font-family:'Liberation Sans',sans-serif;transform:scaleX(0.9566);transform-origin:0 0;">Configuration loaded: 1 configs (v3 mode)</div><div style="position:absolute;left:0;top:1130px;width:2960px;height:92px;background:#f8fafb"></div><div style="position:absolute;left:0;top:1222px;width:2960px;height:2px;background:#d9dbdd"></div><div style="position:absolute;left:0;top:1130px;width:400px;height:92px;background:#f6f6f6"></div><div style="position:absolute;left:426px;top:1136px;width:148px;height:79.5px;background:#f6f6f6"></div><div style="position:absolute;left:452px;top:1160px;width:88px;height:36px;border-radius:15px;background:#3ec9ea"></div><div class="t" style="left:470.94px;top:1167.43px;font-size:20.64px;line-height:20.64px;color:#fff;font-weight:700;font-family:'Liberation Sans',sans-serif;transform:scaleX(0.9803);transform-origin:0 0;">INFO</div><div class="t" style="left:51.80px;top:1159.43px;font-size:29.5px;line-height:29.5px;color:#6b6b6b"><span class="ms"><i>F</i></span><span class="ms"><i>e</i></span><span class="ms"><i>b</i></span><span class="ms"><i>&nbsp;</i></span><span class="ms"><i>1</i></span><span class="ms"><i>0</i></span><span class="ms"><i class="p">,</i></span><span class="ms"><i>&nbsp;</i></span><span class="ms"><i>2</i></span><span class="ms"><i>0</i></span><span class="ms"><i>2</i></span><span class="ms"><i>6</i></span><span class="ms"><i class="p">,</i></span><span class="ms"><i>&nbsp;</i></span><span class="ms"><i>0</i></span><span class="ms"><i>9</i></span><span class="ms"><i class="p">:</i></span><span class="ms"><i>5</i></span><span class="ms"><i>0</i></span></div><div style="position:absolute;left:626px;top:1136px;width:573.2px;height:79.5px;background:#f6f6f6"></div><div class="t" style="left:651.48px;top:1160.15px;font-size:29.36px;line-height:29.36px;color:#6b6b6b;font-weight:400;font-family:'Liberation Sans',sans-serif;transform:scaleX(0.9566);transform-origin:0 0;">Configuration loaded: 0 configs (v3 mode)</div><div style="position:absolute;left:0;top:1224px;width:2960px;height:92px;background:#ffffff"></div><div style="position:absolute;left:0;top:1316px;width:2960px;height:2px;background:#d9dbdd"></div><div style="position:absolute;left:0;top:1224px;width:400px;height:92px;background:#f6f6f6"></div><div style="position:absolute;left:426px;top:1230px;width:148px;height:79.5px;background:#f6f6f6"></div><div style="position:absolute;left:452px;top:1254px;width:88px;height:36px;border-radius:15px;background:#3ec9ea"></div><div class="t" style="left:470.94px;top:1261.43px;font-size:20.64px;line-height:20.64px;color:#fff;font-weight:700;font-family:'Liberation Sans',sans-serif;transform:scaleX(0.9803);transform-origin:0 0;">INFO</div><div class="t" style="left:51.80px;top:1253.43px;font-size:29.5px;line-height:29.5px;color:#6b6b6b"><span class="ms"><i>F</i></span><span class="ms"><i>e</i></span><span class="ms"><i>b</i></span><span class="ms"><i>&nbsp;</i></span><span class="ms"><i>1</i></span><span class="ms"><i>0</i></span><span class="ms"><i class="p">,</i></span><span class="ms"><i>&nbsp;</i></span><span class="ms"><i>2</i></span><span class="ms"><i>0</i></span><span class="ms"><i>2</i></span><span class="ms"><i>6</i></span><span class="ms"><i class="p">,</i></span><span class="ms"><i>&nbsp;</i></span><span class="ms"><i>0</i></span><span class="ms"><i>9</i></span><span class="ms"><i class="p">:</i></span><span class="ms"><i>4</i></span><span class="ms"><i>9</i></span></div><div style="position:absolute;left:626px;top:1230px;width:861.2px;height:79.5px;background:#f6f6f6"></div><div class="t" style="left:650.60px;top:1254.15px;font-size:29.36px;line-height:29.36px;color:#6b6b6b;font-weight:400;font-family:'Liberation Sans',sans-serif;transform:scaleX(0.9603);transform-origin:0 0;">Export completed: 89718207-0401-445f-b1c6-5cca698534d3.pdf</div><div style="position:absolute;left:0;top:1318px;width:2960px;height:92px;background:#f8fafb"></div><div style="position:absolute;left:0;top:1410px;width:2960px;height:2px;background:#d9dbdd"></div><div style="position:absolute;left:0;top:1318px;width:400px;height:92px;background:#f6f6f6"></div><div style="position:absolute;left:426px;top:1324px;width:148px;height:79.5px;background:#f6f6f6"></div><div style="position:absolute;left:452px;top:1348px;width:88px;height:36px;border-radius:15px;background:#3ec9ea"></div><div class="t" style="left:470.94px;top:1355.43px;font-size:20.64px;line-height:20.64px;color:#fff;font-weight:700;font-family:'Liberation Sans',sans-serif;transform:scaleX(0.9803);transform-origin:0 0;">INFO</div><div class="t" style="left:51.80px;top:1347.43px;font-size:29.5px;line-height:29.5px;color:#6b6b6b"><span class="ms"><i>F</i></span><span class="ms"><i>e</i></span><span class="ms"><i>b</i></span><span class="ms"><i>&nbsp;</i></span><span class="ms"><i>1</i></span><span class="ms"><i>0</i></span><span class="ms"><i class="p">,</i></span><span class="ms"><i>&nbsp;</i></span><span class="ms"><i>2</i></span><span class="ms"><i>0</i></span><span class="ms"><i>2</i></span><span class="ms"><i>6</i></span><span class="ms"><i class="p">,</i></span><span class="ms"><i>&nbsp;</i></span><span class="ms"><i>0</i></span><span class="ms"><i>9</i></span><span class="ms"><i class="p">:</i></span><span class="ms"><i>4</i></span><span class="ms"><i>9</i></span></div><div style="position:absolute;left:626px;top:1324px;width:949.5px;height:79.5px;background:#f6f6f6"></div><div class="t" style="left:651.92px;top:1348.15px;font-size:29.36px;line-height:29.36px;color:#6b6b6b;font-weight:400;font-family:'Liberation Sans',sans-serif;transform:scaleX(0.9591);transform-origin:0 0;">Starting export for document: 89718207-0401-445f-b1c6-5cca698534d3</div></div><svg style="position:absolute;left:0;top:1860px" width="3844" height="64" viewBox="0 1860 3844 64"><path fill="#101216" d="M4,1884 C5,1907 24,1922.5 66,1924 L4,1924 Z"/><path fill="#101216" d="M3844,1880 C3843,1906 3825,1922.5 3780,1924 L3844,1924 Z"/></svg>
</body></html>
